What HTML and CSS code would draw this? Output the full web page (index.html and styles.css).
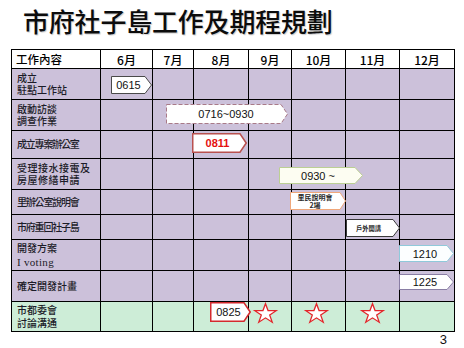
FILE: index.html
```html
<!DOCTYPE html>
<html lang="zh-Hant">
<head>
<meta charset="utf-8">
<title>市府社子島工作及期程規劃</title>
<link rel="stylesheet" href="styles.css">
</head>
<body>
<h1 class="title">市府社子島工作及期程規劃</h1>
<div class="chart">
  <div class="grid">
    <div class="row head h18"><div class="label"><span>工作內容</span></div><div>6月</div><div>7月</div><div>8月</div><div>9月</div><div>10月</div><div>11月</div><div>12月</div></div>
    <div class="row"><div class="label"><span>成立<br>駐點工作站</span></div><div></div><div></div><div></div><div></div><div></div><div></div><div></div></div>
    <div class="row"><div class="label"><span>啟動訪談<br>調查作業</span></div><div></div><div></div><div></div><div></div><div></div><div></div><div></div></div>
    <div class="row h27"><div class="label tight"><span>成立專案辦公室</span></div><div></div><div></div><div></div><div></div><div></div><div></div><div></div></div>
    <div class="row"><div class="label wide"><span>受理接水接電及<br>房屋修繕申請</span></div><div></div><div></div><div></div><div></div><div></div><div></div><div></div></div>
    <div class="row h24"><div class="label tight"><span>里辦公室說明會</span></div><div></div><div></div><div></div><div></div><div></div><div></div><div></div></div>
    <div class="row h24"><div class="label tight"><span>市府重回社子島</span></div><div></div><div></div><div></div><div></div><div></div><div></div><div></div></div>
    <div class="row"><div class="label loose"><span>開發方案<br><span class="latin">I voting</span></span></div><div></div><div></div><div></div><div></div><div></div><div></div><div></div></div>
    <div class="row"><div class="label"><span>確定開發計畫</span></div><div></div><div></div><div></div><div></div><div></div><div></div><div></div></div>
    <div class="row green h29"><div class="label"><span>市都委會<br>討論溝通</span></div><div></div><div></div><div></div><div></div><div></div><div></div><div></div></div>
  </div>

  <div class="tag t0615"><svg viewBox="0 0 41 18"><polygon points="0.5,0.5 34,0.5 40.5,9 34,17.5 0.5,17.5"/></svg><span>0615</span></div>
  <div class="tag t0716"><svg viewBox="0 0 122 20"><polygon points="0.5,0.5 115,0.5 121.5,10 115,19.5 0.5,19.5"/></svg><span>0716~0930</span></div>
  <div class="tag t0811"><svg viewBox="0 0 55 20"><polygon points="0.75,0.75 48,0.75 54.2,10 48,19.25 0.75,19.25"/></svg><span>0811</span></div>
  <div class="tag t0930"><svg viewBox="0 0 84 17"><polygon points="0.5,0.5 76,0.5 83.5,8.5 76,16.5 0.5,16.5"/></svg><span>0930 ~</span></div>
  <div class="tag tmeet"><svg viewBox="0 0 56 18"><polygon points="0.5,0.5 50,0.5 55.5,9 50,17.5 0.5,17.5"/></svg><span>里民說明會<br>2場</span></div>
  <div class="tag tout"><svg viewBox="0 0 54 18"><polygon points="0.5,0.5 47,0.5 53.5,9 47,17.5 0.5,17.5"/></svg><span>戶外開講</span></div>
  <div class="tag t1210"><svg viewBox="0 0 55 17"><polygon points="0.5,0.5 48,0.5 54.5,8.5 48,16.5 0.5,16.5"/></svg><span>1210</span></div>
  <div class="tag t1225"><svg viewBox="0 0 55 16"><polygon points="0.5,0.5 48,0.5 54.5,8 48,15.5 0.5,15.5"/></svg><span>1225</span></div>
  <div class="tag t0825"><svg viewBox="0 0 41 20"><polygon points="0.75,0.75 34,0.75 40.2,10 34,19.25 0.75,19.25"/></svg><span>0825</span></div>

  <svg class="star s1" viewBox="0 0 24 23" preserveAspectRatio="none"><polygon points="12,0.8 14.7,8.8 23.2,8.8 16.4,13.9 19,22 12,17.1 5,22 7.6,13.9 0.8,8.8 9.3,8.8"/></svg>
  <svg class="star s2" viewBox="0 0 24 23" preserveAspectRatio="none"><polygon points="12,0.8 14.7,8.8 23.2,8.8 16.4,13.9 19,22 12,17.1 5,22 7.6,13.9 0.8,8.8 9.3,8.8"/></svg>
  <svg class="star s3" viewBox="0 0 24 23" preserveAspectRatio="none"><polygon points="12,0.8 14.7,8.8 23.2,8.8 16.4,13.9 19,22 12,17.1 5,22 7.6,13.9 0.8,8.8 9.3,8.8"/></svg>
</div>
<div class="page-num">3</div>
</body>
</html>
```

FILE: styles.css
```css
* { box-sizing: border-box; }
html, body { margin: 0; padding: 0; background: #fff; }
body {
  width: 464px;
  height: 348px;
  overflow: hidden;
  padding-top: 6px;
  font-family: "Noto Sans CJK TC", "Noto Sans", sans-serif;
  color: #111;
}
.title {
  margin: 0 0 0 23px;
  font-size: 26px;
  line-height: 30px;
  font-weight: 500;
  letter-spacing: -0.2px;
  color: #0c0c0c;
  text-shadow: 1px 1px 1px rgba(0, 0, 0, 0.2);
}
.chart {
  position: relative;
  width: 444px;
  margin: 13px 0 0 11px;
}
.grid {
  display: flex;
  flex-direction: column;
  gap: 1px;
  padding: 1px;
  background: #000;
}
.row {
  display: grid;
  grid-template-columns: 88px 51px 40px 54px 42px 53px 53px 54px;
  gap: 1px;
  height: 30px;
}
.row > div { background: #ccc1da; }
.row.green > div { background: #cdedd7; }
.row.head > div {
  background: #fff;
  display: flex;
  align-items: center;
  justify-content: center;
  font-size: 12px;
  font-weight: 500;
  color: #000;
}
.h18 { height: 18px; }
.h24 { height: 24px; }
.h27 { height: 27px; }
.h29 { height: 29px; }
.label {
  display: flex;
  align-items: center;
  padding-left: 5px;
  font-size: 10px;
  line-height: 12.5px;
  font-weight: 500;
  color: #1c1c28;
}
.row.head > .label {
  justify-content: flex-start;
  font-size: 11.5px;
  padding-left: 4px;
}
.label.tight { letter-spacing: -1.2px; }
.label.wide { letter-spacing: 0.5px; }
.label.loose { line-height: 14px; }
.latin {
  font-family: "Liberation Serif", serif;
  font-size: 11px;
  font-weight: 400;
  letter-spacing: 0.3px;
}

.tag {
  position: absolute;
  display: flex;
  align-items: center;
  justify-content: center;
  font-family: "Liberation Sans", Arial, sans-serif;
  font-size: 11px;
  color: #111;
}
.tag svg {
  position: absolute;
  left: 0;
  top: 0;
  width: 100%;
  height: 100%;
}
.tag polygon { fill: #fff; stroke-width: 1; }
.tag span { position: relative; text-align: center; }

.t0615 { left: 100px; top: 27px; width: 41px; height: 18px; padding-right: 6px; }
.t0615 polygon { stroke: #4a4a4a; }

.t0716 { left: 155px; top: 55px; width: 122px; height: 20px; padding-right: 2px; }
.t0716 polygon { stroke: #a87a88; stroke-dasharray: 4 2; }

.t0811 { left: 181px; top: 84px; width: 55px; height: 20px; padding-right: 4px; font-weight: 700; color: #e41010; }
.t0811 polygon { stroke: #b9514f; stroke-width: 1.5; }

.t0930 { left: 268px; top: 118px; width: 84px; height: 17px; padding-right: 6px; }
.t0930 polygon { fill: #fdfdf2; stroke: #bccf94; }

.tmeet { left: 279px; top: 143px; width: 56px; height: 18px; padding-right: 6px; font-family: "Noto Sans CJK TC", sans-serif; font-size: 7px; line-height: 8px; font-weight: 700; color: #2a2a2a; }
.tmeet polygon { stroke: #f0a77a; }

.tout { left: 335px; top: 170px; width: 54px; height: 18px; padding-right: 9px; font-family: "Noto Sans CJK TC", sans-serif; font-size: 6.3px; font-weight: 700; color: #2a2a2a; }
.tout polygon { stroke: #3a3a3a; }

.t1210 { left: 388px; top: 196px; width: 55px; height: 17px; padding-right: 3px; }
.t1210 polygon { fill: #fcfeff; stroke: #8fc9da; }

.t1225 { left: 388px; top: 225px; width: 55px; height: 16px; padding-right: 3px; }
.t1225 polygon { stroke: #8a7ea4; }

.t0825 { left: 199px; top: 253px; width: 41px; height: 20px; padding-right: 4px; }
.t0825 polygon { stroke: #d42a2e; stroke-width: 1.5; }

.star {
  position: absolute;
  top: 254px;
  width: 23px;
  height: 20px;
  overflow: visible;
}
.star polygon { fill: #fff; stroke: #e3262b; stroke-width: 1.4; stroke-linejoin: miter; }
.s1 { left: 243px; }
.s2 { left: 294px; }
.s3 { left: 350px; }

.page-num {
  margin: 1px 17px 0 0;
  text-align: right;
  font-family: "Liberation Sans", Arial, sans-serif;
  font-size: 13px;
  line-height: 14px;
  color: #111;
}
```
